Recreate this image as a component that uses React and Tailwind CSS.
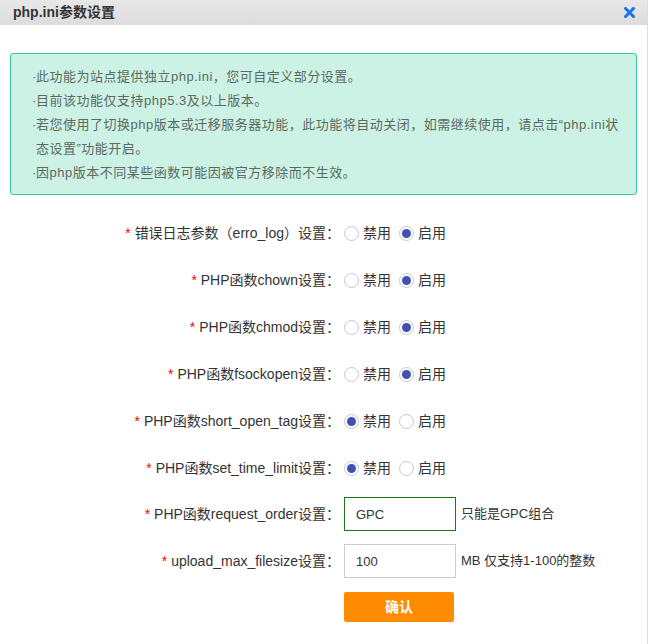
import React from 'react';

const FONT = { fontFamily: '"Liberation Sans", "Noto Sans CJK SC", sans-serif' };

const NOTES = [
  '此功能为站点提供独立php.ini，您可自定义部分设置。',
  '目前该功能仅支持php5.3及以上版本。',
  '若您使用了切换php版本或迁移服务器功能，此功能将自动关闭，如需继续使用，请点击“php.ini状态设置”功能开启。',
  '因php版本不同某些函数可能因被官方移除而不生效。',
];

const SWITCHES = [
  { label: '错误日志参数（erro_log）设置：', on: true },
  { label: 'PHP函数chown设置：', on: true },
  { label: 'PHP函数chmod设置：', on: true },
  { label: 'PHP函数fsockopen设置：', on: true },
  { label: 'PHP函数short_open_tag设置：', on: false },
  { label: 'PHP函数set_time_limit设置：', on: false },
];

function Radio({ checked, text }) {
  return (
    <label className="flex items-center gap-[4px]">
      <span className="w-[15px] h-[15px] rounded-full border border-[#c8c8c8] bg-white flex items-center justify-center">
        {checked && <span className="w-[9px] h-[9px] rounded-full bg-[#3f51b5]" />}
      </span>
      <span>{text}</span>
    </label>
  );
}

function Label({ children }) {
  return (
    <div className="w-[340px] shrink-0 text-right">
      <span className="text-[#f00]">*</span> {children}
    </div>
  );
}

export default function App() {
  return (
    <div className="w-[648px] h-[644px] bg-white text-[#333] border-r border-[#ddd] overflow-hidden" style={FONT}>
      <header className="h-[25px] flex items-center justify-between pl-[13px] pr-[12px] bg-gradient-to-b from-[#e8e8e8] to-[#dcdcdc]">
        <h1 className="text-[14px] font-bold text-[#333]">php.ini参数设置</h1>
        <svg width="11" height="11" viewBox="0 0 11 11">
          <path d="M1.5 1.5 L9.5 9.5 M9.5 1.5 L1.5 9.5" stroke="#1a73e8" strokeWidth="3" strokeLinecap="square" />
        </svg>
      </header>

      <div className="mx-[10px] mt-[28px] rounded-[3px] border border-[#34c99a] bg-[#ccf2e5] pl-[25px] pr-[12px] pt-[11px] pb-[9px] text-[13px] leading-[24px] tracking-[0.5px] text-[#5c6a60]">
        {NOTES.map(n => (
          <div key={n} className="relative">
            <span className="absolute -left-[4px] top-0">·</span>
            {n}
          </div>
        ))}
      </div>

      <div className="mt-[24px] text-[14px] flex flex-col">
        {SWITCHES.map(s => (
          <div key={s.label} className="h-[47px] flex items-start pt-[4px]">
            <Label>{s.label}</Label>
            <div className="flex items-center gap-[8px] ml-[4px] h-[21px]">
              <Radio checked={!s.on} text="禁用" />
              <Radio checked={s.on} text="启用" />
            </div>
          </div>
        ))}

        <div className="flex items-center h-[34px] mt-[-4px]">
          <Label>PHP函数request_order设置：</Label>
          <input
            defaultValue="GPC"
            className="ml-[4px] w-[112px] h-[34px] border border-[#1a7a1a] px-[11px] text-[13px] outline-none"
            style={FONT}
          />
          <span className="ml-[5px] text-[13px]">只能是GPC组合</span>
        </div>

        <div className="flex items-center h-[34px] mt-[13px]">
          <Label>upload_max_filesize设置：</Label>
          <input
            defaultValue="100"
            className="ml-[4px] w-[112px] h-[34px] border border-[#ccc] px-[11px] text-[13px] outline-none"
            style={FONT}
          />
          <span className="ml-[5px] text-[13px]">MB 仅支持1-100的整数</span>
        </div>

        <div className="flex mt-[14px]">
          <div className="w-[344px] shrink-0" />
          <button className="w-[110px] h-[30px] rounded-[2px] bg-[#ff8c00] text-white text-[14px] font-bold">确认</button>
        </div>
      </div>
    </div>
  );
}
